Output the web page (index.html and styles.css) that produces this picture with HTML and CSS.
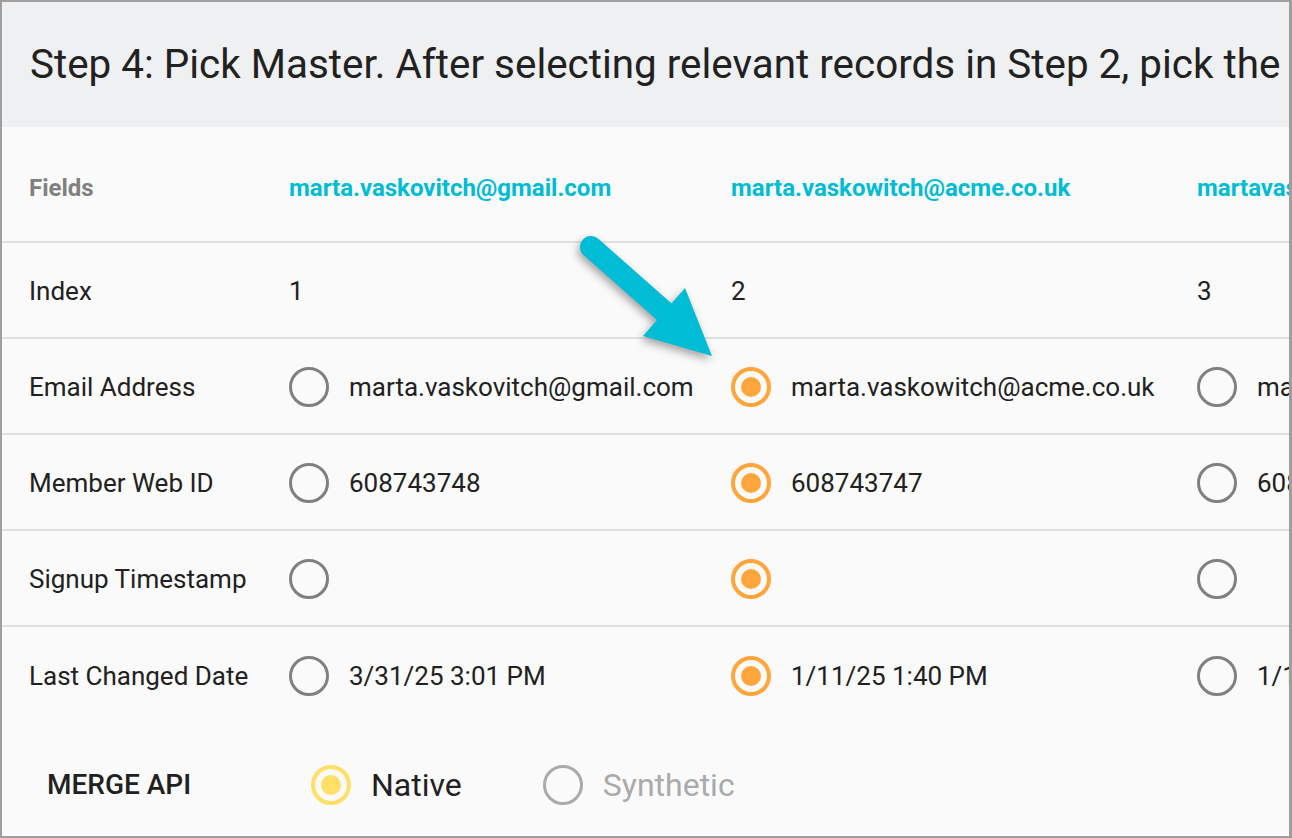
FILE: index.html
```html
<!DOCTYPE html>
<html lang="en">
<head>
  <meta charset="UTF-8">
  <meta name="viewport" content="width=device-width, initial-scale=1.0">
  <title>Pick Master</title>
  <link rel="stylesheet" href="styles.css">
</head>
<body>
  <div class="frame">
    <div class="step-title">Step 4: Pick Master. After selecting relevant records in Step 2, pick the</div>

    <div class="grid">
      <div class="row head">
        <div class="cell field">Fields</div>
        <div class="cell rec">marta.vaskovitch@gmail.com</div>
        <div class="cell rec">marta.vaskowitch@acme.co.uk</div>
        <div class="cell rec">martavaskovitch@hotmail.com</div>
      </div>

      <div class="row">
        <div class="cell">Index</div>
        <div class="cell">1</div>
        <div class="cell">2</div>
        <div class="cell">3</div>
      </div>

      <div class="row">
        <div class="cell">Email Address</div>
        <div class="cell"><span class="radio"></span>marta.vaskovitch@gmail.com</div>
        <div class="cell"><span class="radio checked"></span>marta.vaskowitch@acme.co.uk</div>
        <div class="cell"><span class="radio"></span>martavaskovitch@hotmail.com</div>
      </div>

      <div class="row">
        <div class="cell">Member Web ID</div>
        <div class="cell"><span class="radio"></span>608743748</div>
        <div class="cell"><span class="radio checked"></span>608743747</div>
        <div class="cell"><span class="radio"></span>608743746</div>
      </div>

      <div class="row">
        <div class="cell">Signup Timestamp</div>
        <div class="cell"><span class="radio"></span></div>
        <div class="cell"><span class="radio checked"></span></div>
        <div class="cell"><span class="radio"></span></div>
      </div>

      <div class="row last">
        <div class="cell">Last Changed Date</div>
        <div class="cell"><span class="radio"></span>3/31/25 3:01 PM</div>
        <div class="cell"><span class="radio checked"></span>1/11/25 1:40 PM</div>
        <div class="cell"><span class="radio"></span>1/10/25 9:12 AM</div>
      </div>
    </div>

    <div class="merge">
      <div class="merge-label">MERGE API</div>
      <label class="option"><span class="radio native"></span>Native</label>
      <label class="option off"><span class="radio"></span>Synthetic</label>
    </div>

    <!-- callout arrow pointing at the picked column -->
    <svg class="arrow" width="1292" height="838" viewBox="0 0 1292 838">
      <line x1="591" y1="247" x2="668" y2="315" stroke="#00bcd4" stroke-width="22" stroke-linecap="round"/>
      <polygon points="685,288 643,336 712,356" fill="#00bcd4"/>
    </svg>
  </div>
</body>
</html>
```

FILE: styles.css
```css
body {
  margin: 0;
  font-family: Roboto, "Liberation Sans", sans-serif;
  color: #212121;
}
.frame {
  position: relative;
  width: 1292px;
  height: 838px;
  box-sizing: border-box;
  border: 2px solid #9e9e9e;
  border-right-width: 3px;
  background-color: #fafafa;
  overflow: hidden;
  white-space: nowrap;
}
.step-title {
  height: 125px;
  padding-left: 28px;
  display: flex;
  align-items: center;
  background-color: #eff0f2;
  font-size: 40.4px;
}
.row {
  display: grid;
  grid-template-columns: 260px 442px 466px 400px;
  align-items: center;
  height: 96px;
  padding-left: 27px;
  padding-top: 2px;
  box-sizing: border-box;
  border-bottom: 2px solid #e0e0e0;
  font-size: 26px;
}
.row.head {
  height: 116px;
  padding-top: 8px;
  font-size: 24px;
  font-weight: bold;
}
.row.last {
  border-bottom: none;
}
.cell {
  display: flex;
  align-items: center;
  overflow: hidden;
}
.field {
  color: #808080;
}
.rec {
  color: #00bcd4;
}
.radio {
  width: 40px;
  height: 40px;
  flex: none;
  margin-right: 20px;
  box-sizing: border-box;
  border: 3px solid #808080;
  border-radius: 50%;
  display: flex;
  align-items: center;
  justify-content: center;
}
.radio.checked {
  border: 4px solid #ffa53c;
}
.radio.checked::after,
.radio.native::after {
  content: "";
  width: 20px;
  height: 20px;
  border-radius: 50%;
  background-color: #ffa53c;
}
.radio.native {
  border: 4px solid #ffdf66;
}
.radio.native::after {
  background-color: #ffdf66;
}
.merge {
  display: flex;
  align-items: center;
  height: 120px;
  padding-left: 45px;
  padding-top: 3px;
  box-sizing: border-box;
}
.merge-label {
  width: 264px;
  font-size: 28px;
  font-weight: 500;
}
.option {
  display: flex;
  align-items: center;
  margin-right: 81px;
  font-size: 32px;
}
.option.off {
  color: #aaaaaa;
}
.option.off .radio {
  border-color: #aaaaaa;
}
.arrow {
  position: absolute;
  left: -2px;
  top: -2px;
  filter: drop-shadow(-2px 4px 4px rgba(0, 0, 0, 0.35));
}
```
